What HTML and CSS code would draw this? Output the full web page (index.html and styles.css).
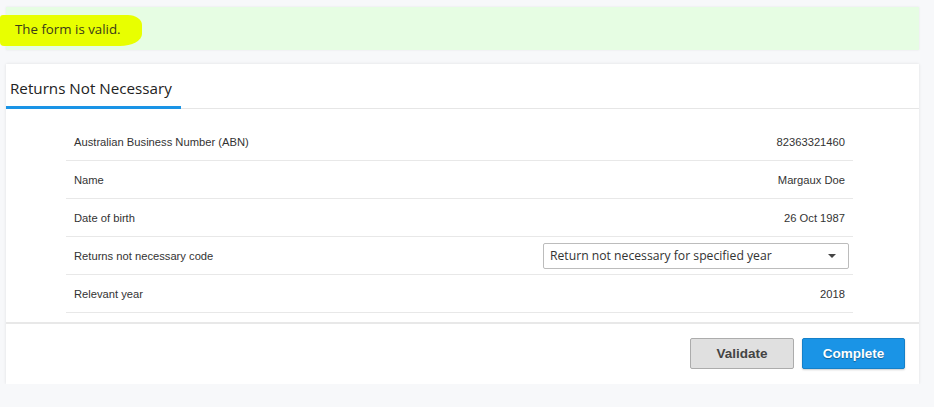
FILE: index.html
```html
<!DOCTYPE html>
<html>
<head>
<title>Returns Not Necessary</title>
<link rel="stylesheet" href="styles.css">
</head>
<body>

<div class="page">
  <div class="alert">
    <span class="marker"></span>
    <span class="alert-text">The form is valid.</span>
  </div>

  <div class="card">
    <div class="tabs">
      <div class="tab active">Returns Not Necessary</div>
    </div>

    <div class="rows">
      <div class="row">
        <span class="label">Australian Business Number (ABN)</span>
        <span class="value">82363321460</span>
      </div>
      <div class="row">
        <span class="label">Name</span>
        <span class="value">Margaux Doe</span>
      </div>
      <div class="row">
        <span class="label">Date of birth</span>
        <span class="value">26 Oct 1987</span>
      </div>
      <div class="row">
        <span class="label">Returns not necessary code</span>
        <div class="select">
          <span>Return not necessary for specified year</span>
          <span class="caret"></span>
        </div>
      </div>
      <div class="row">
        <span class="label">Relevant year</span>
        <span class="value">2018</span>
      </div>
    </div>

    <div class="footer">
      <button class="btn btn-grey">Validate</button>
      <button class="btn btn-blue">Complete</button>
    </div>
  </div>
</div>

</body>
</html>
```

FILE: styles.css
```css
body {
  margin: 0;
  background: #f7f8fa;
  font-family: 'Liberation Sans', Arial, sans-serif;
  color: #333;
}

.page {
  width: 913px;
  padding: 7px 0 0 6px;
}

.alert {
  position: relative;
  height: 43px;
  background: #e6fde3;
  box-shadow: 0 0 2px rgba(0, 0, 0, 0.08);
  display: flex;
  align-items: center;
  padding-left: 9px;
  font-family: 'Open Sans', sans-serif;
  font-size: 13.3px;
}

.alert-text {
  position: relative;
  color: #3a3a1a;
}

/* highlighter scribble over the message */
.marker {
  position: absolute;
  left: -6px;
  top: 8px;
  width: 142px;
  height: 31px;
  background: #e8ff00;
  border-radius: 3px 14px 22px 4px / 3px 10px 12px 4px;
}

.card {
  margin-top: 14px;
  background: #fff;
  box-shadow: 0 0 3px rgba(0, 0, 0, 0.1);
}

.tabs {
  border-bottom: 1px solid #e6e6e6;
  display: flex;
}

.tab {
  font-family: 'Open Sans', sans-serif;
  font-size: 15.2px;
  color: #222;
  padding: 14px 9px 8px 4px;
  border-bottom: 3px solid #1a94e6;
  margin-bottom: -1px;
}

.rows {
  padding: 14px 66px 9px 60px;
}

.row {
  height: 37px;
  border-bottom: 1px solid #e8e8e8;
  display: flex;
  align-items: center;
  justify-content: space-between;
  padding: 0 8px;
  font-size: 11.2px;
  color: #333;
}

.select {
  width: 286px;
  height: 24px;
  border: 1px solid #bcbcbc;
  border-radius: 2px;
  margin-right: -4px;
  display: flex;
  align-items: center;
  justify-content: space-between;
  padding: 0 12px 0 6px;
  font-family: 'Open Sans', sans-serif;
  font-size: 12.2px;
  color: #333;
}

.caret {
  border-left: 4px solid transparent;
  border-right: 4px solid transparent;
  border-top: 4px solid #444;
}

.footer {
  border-top: 2px solid #e8e8e8;
  display: flex;
  justify-content: flex-end;
  gap: 8px;
  padding: 14px 14px 15px 0;
}

.btn {
  width: 104px;
  height: 31px;
  border-radius: 2px;
  font-family: 'Liberation Sans', Arial, sans-serif;
  font-weight: bold;
  font-size: 13.5px;
  cursor: pointer;
}

.btn-grey {
  background: #e0e0e0;
  border: 1px solid #acacac;
  color: #444;
}

.btn-blue {
  width: 103px;
  background: #1a94e6;
  border: 1px solid #1480c9;
  color: #fff;
  text-shadow: 0 1px 1px rgba(0, 0, 0, 0.35);
  box-shadow: 0 1px 2px rgba(0, 0, 0, 0.2);
}
```
